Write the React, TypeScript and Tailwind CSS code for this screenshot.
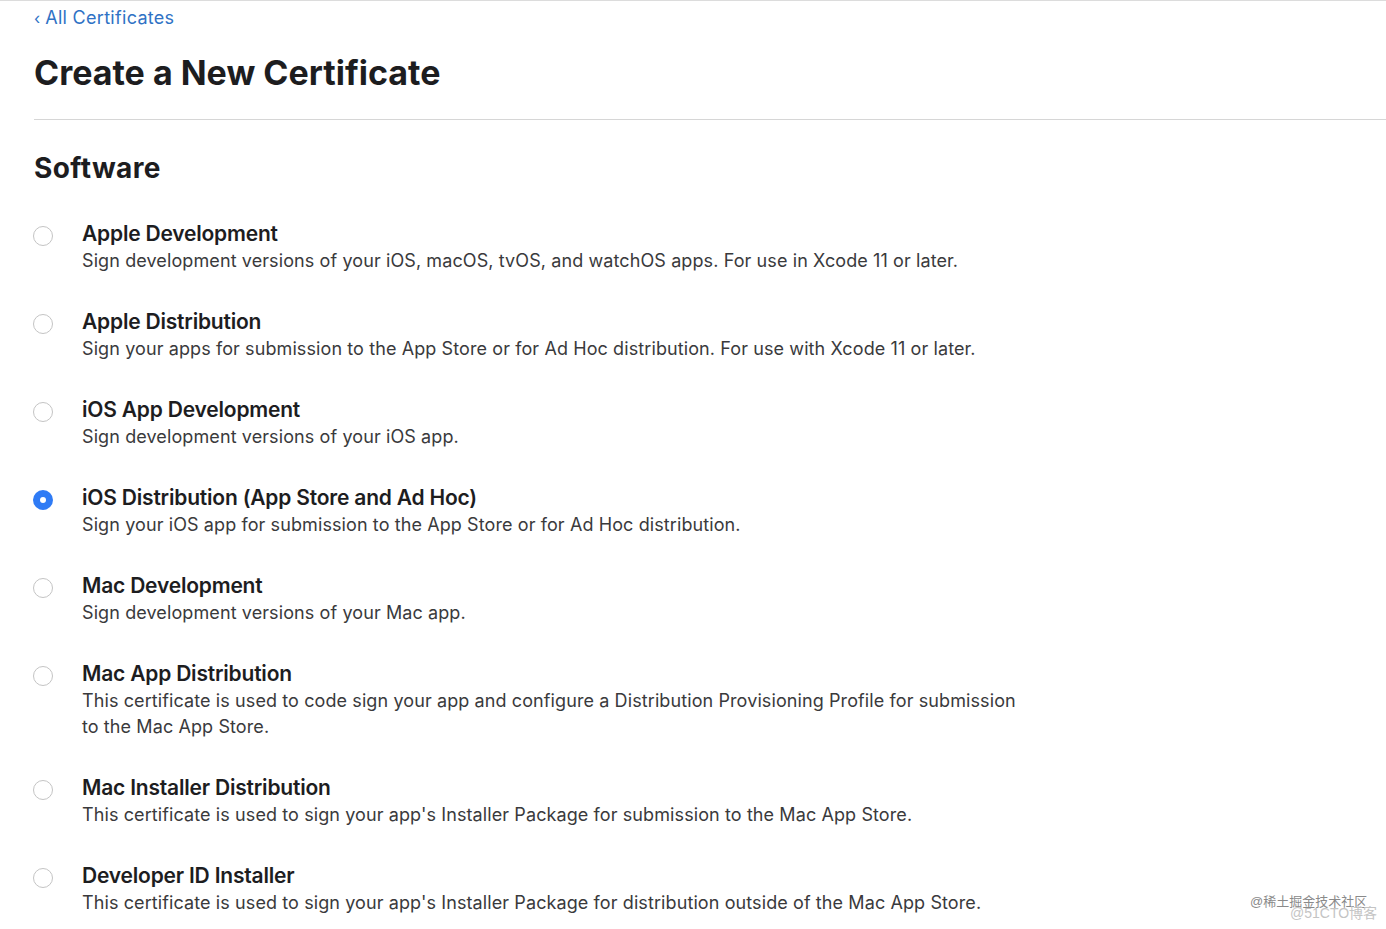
import React, { useState } from 'react';

interface CertType {
  id: string;
  name: string;
  description: string;
}

const certTypes: CertType[] = [
  {
    id: 'apple-dev',
    name: 'Apple Development',
    description:
      'Sign development versions of your iOS, macOS, tvOS, and watchOS apps. For use in Xcode 11 or later.',
  },
  {
    id: 'apple-dist',
    name: 'Apple Distribution',
    description:
      'Sign your apps for submission to the App Store or for Ad Hoc distribution. For use with Xcode 11 or later.',
  },
  {
    id: 'ios-dev',
    name: 'iOS App Development',
    description: 'Sign development versions of your iOS app.',
  },
  {
    id: 'ios-dist',
    name: 'iOS Distribution (App Store and Ad Hoc)',
    description: 'Sign your iOS app for submission to the App Store or for Ad Hoc distribution.',
  },
  {
    id: 'mac-dev',
    name: 'Mac Development',
    description: 'Sign development versions of your Mac app.',
  },
  {
    id: 'mac-app-dist',
    name: 'Mac App Distribution',
    description:
      'This certificate is used to code sign your app and configure a Distribution Provisioning Profile for submission to the Mac App Store.',
  },
  {
    id: 'mac-installer',
    name: 'Mac Installer Distribution',
    description:
      "This certificate is used to sign your app's Installer Package for submission to the Mac App Store.",
  },
  {
    id: 'devid-installer',
    name: 'Developer ID Installer',
    description:
      "This certificate is used to sign your app's Installer Package for distribution outside of the Mac App Store.",
  },
];

const App: React.FC = () => {
  const [selected, setSelected] = useState('ios-dist');

  return (
    <div
      className="relative min-h-[929px] bg-white border-t border-[#dcdcdc] text-[#1d1d1f] overflow-hidden"
      style={{ fontFamily: 'Inter, "Noto Sans", sans-serif' }}
    >
      <div className="pl-[34px]">
        {/* Back link */}
        <a className="flex items-center gap-[5px] pt-[6px] text-[18px] leading-[22px] text-[#2f72c5]">
          <span className="text-[16px]">‹</span>
          <span className="tracking-[0.3px]">All Certificates</span>
        </a>

        <h1 className="mt-[24px] text-[34px] leading-[40px] font-bold">
          Create a New Certificate
        </h1>

        <div className="mt-[26px] border-t border-[#d6d6d6]" />

        <h2 className="mt-[31px] text-[28px] leading-[34px] font-bold tracking-[0.4px]">Software</h2>

        {/* Certificate options */}
        <div className="mt-[36px] flex flex-col gap-[35px]">
          {certTypes.map((cert) => {
            const isSelected = cert.id === selected;
            return (
              <label
                key={cert.id}
                className="flex items-start cursor-pointer -ml-[1px]"
                onClick={() => setSelected(cert.id)}
              >
                <span
                  className={`mt-[5px] w-[20px] h-[20px] rounded-full shrink-0 flex items-center justify-center ${
                    isSelected ? 'bg-[#2f7bf5]' : 'border border-[#c4c4c4] bg-white'
                  }`}
                >
                  {isSelected && <span className="w-[6px] h-[6px] rounded-full bg-white" />}
                </span>
                <div className="ml-[29px] max-w-[950px]">
                  <div className="text-[21px] leading-[26px] font-semibold tracking-[-0.2px]">{cert.name}</div>
                  <div className="mt-[1px] text-[18px] leading-[26px] text-[#3a3a3c] tracking-[0.1px]">
                    {cert.description}
                  </div>
                </div>
              </label>
            );
          })}
        </div>
      </div>

      {/* Watermark */}
      <div
        className="absolute left-[1250px] top-[895px] text-[13px] leading-[11px] text-[#8a8a8a]"
        style={{ fontFamily: '"Liberation Sans", "Noto Sans CJK SC", sans-serif' }}
      >
        @稀土掘金技术社区
      </div>
      <div
        className="absolute left-[1290px] top-[906px] text-[14px] leading-[13px] text-[#c4c4c4]"
        style={{ fontFamily: '"Liberation Sans", "Noto Sans CJK SC", sans-serif' }}
      >
        @51CTO博客
      </div>
    </div>
  );
};

export default App;
